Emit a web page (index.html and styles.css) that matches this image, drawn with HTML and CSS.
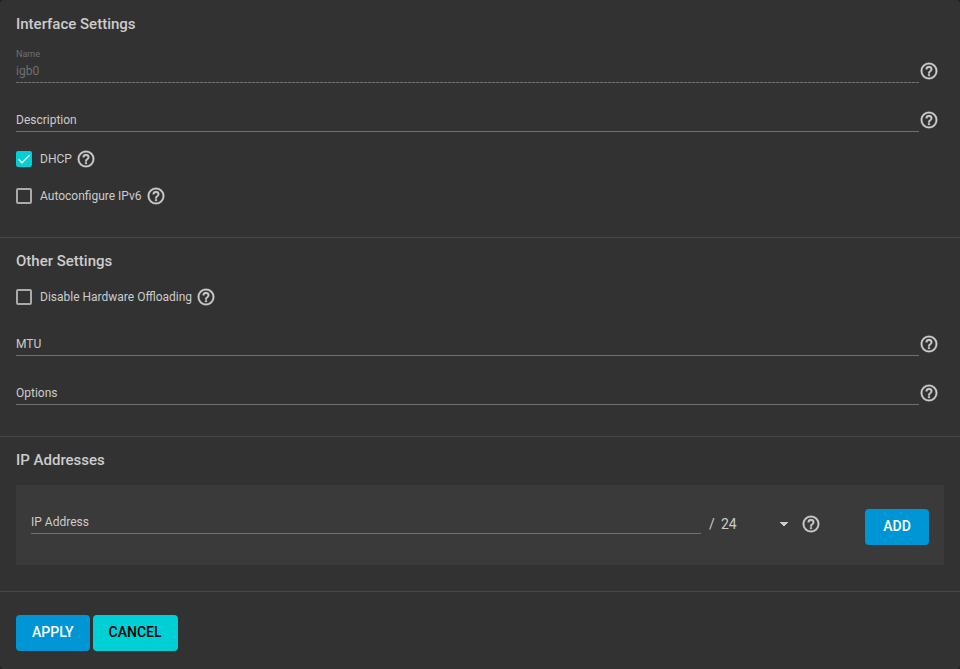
FILE: index.html
```html
<!DOCTYPE html>
<html lang="en">
<head>
    <meta charset="UTF-8">
    <meta name="viewport" content="width=device-width, initial-scale=1.0">
    <title>Interface Settings</title>
    <link rel="stylesheet" href="styles.css">
</head>
<body>
    <svg class="sprite" aria-hidden="true">
        <symbol id="help" viewBox="0 0 24 24">
            <path d="M11,18H13V16H11V18M12,2A10,10 0 0,0 2,12A10,10 0 0,0 12,22A10,10 0 0,0 22,12A10,10 0 0,0 12,2M12,20C7.59,20 4,16.41 4,12C4,7.59 7.59,4 12,4C16.41,4 20,7.59 20,12C20,16.41 16.41,20 12,20M12,6A4,4 0 0,0 8,10H10A2,2 0 0,1 12,8A2,2 0 0,1 14,10C14,12 11,11.75 11,15H13C13,12.75 16,12.5 16,10A4,4 0 0,0 12,6Z"/>
        </symbol>
    </svg>
    <form class="card">
        <section class="section">
            <h2>Interface Settings</h2>
            <div class="field floating">
                <div class="control">
                    <label for="name">Name</label>
                    <input type="text" id="name" value="igb0" disabled>
                </div>
                <svg class="help"><use href="#help"/></svg>
            </div>
            <div class="field">
                <div class="control">
                    <label for="description">Description</label>
                    <input type="text" id="description">
                </div>
                <svg class="help"><use href="#help"/></svg>
            </div>
            <div class="check">
                <input type="checkbox" id="dhcp" checked>
                <svg class="tick" viewBox="0 0 24 24"><path d="M4.1,12.7 9,17.6 20.3,6.3"/></svg>
                <label for="dhcp">DHCP</label>
                <svg class="help"><use href="#help"/></svg>
            </div>
            <div class="check">
                <input type="checkbox" id="ipv6">
                <svg class="tick" viewBox="0 0 24 24"><path d="M4.1,12.7 9,17.6 20.3,6.3"/></svg>
                <label for="ipv6">Autoconfigure IPv6</label>
                <svg class="help"><use href="#help"/></svg>
            </div>
        </section>
        <section class="section">
            <h2>Other Settings</h2>
            <div class="check">
                <input type="checkbox" id="offloading">
                <svg class="tick" viewBox="0 0 24 24"><path d="M4.1,12.7 9,17.6 20.3,6.3"/></svg>
                <label for="offloading">Disable Hardware Offloading</label>
                <svg class="help"><use href="#help"/></svg>
            </div>
            <div class="field">
                <div class="control">
                    <label for="mtu">MTU</label>
                    <input type="text" id="mtu">
                </div>
                <svg class="help"><use href="#help"/></svg>
            </div>
            <div class="field">
                <div class="control">
                    <label for="options">Options</label>
                    <input type="text" id="options">
                </div>
                <svg class="help"><use href="#help"/></svg>
            </div>
        </section>
        <section class="section">
            <h2>IP Addresses</h2>
            <div class="panel">
                <div class="control">
                    <label for="address">IP Address</label>
                    <input type="text" id="address">
                </div>
                <div class="netmask">
                    <label for="netmask">/</label>
                    <select id="netmask">
                        <option>8</option>
                        <option>16</option>
                        <option selected>24</option>
                        <option>32</option>
                    </select>
                    <svg class="help"><use href="#help"/></svg>
                </div>
                <button type="button" class="button primary">ADD</button>
            </div>
        </section>
        <div class="actions">
            <button type="submit" class="button primary">APPLY</button>
            <button type="button" class="button accent">CANCEL</button>
        </div>
    </form>
</body>
</html>
```
FILE: styles.css
```css
* {
    box-sizing: border-box;
}
body {
    margin: 0;
    background-color: #1e1e1e;
    color: #cccccc;
    font-family: Roboto, Arial, sans-serif;
    font-size: 12px;
}
.sprite {
    display: none;
}
.card {
    background-color: #323232;
    border-radius: 4px;
}
.section {
    padding: 11px 16px 16px;
    border-top: 1px solid #474747;
    display: flow-root;
}
.section:first-child {
    border-top-color: transparent;
}
h2 {
    margin: 0 0 12px;
    font-size: 15px;
    font-weight: 500;
    line-height: 24px;
}
.help {
    width: 20px;
    height: 20px;
    flex: none;
    fill: #cccccc;
    stroke: #cccccc;
    stroke-width: 0.4;
}
.field {
    display: flex;
    align-items: flex-end;
    margin: 13px 0 15px;
    padding-right: 5px;
}
.field .help {
    margin-bottom: 2px;
}
.control {
    position: relative;
    flex: 1;
    padding-top: 12px;
}
.control label {
    position: absolute;
    left: 0;
    bottom: 1px;
    line-height: 21px;
    pointer-events: none;
}
.control input {
    display: block;
    width: 100%;
    height: 22px;
    padding: 0;
    border: none;
    border-bottom: 1px solid #707070;
    outline: none;
    background: none;
    color: #cccccc;
    font: inherit;
}
.control input:disabled {
    border-bottom: none;
    padding-bottom: 3px;
    background: repeating-linear-gradient(to right, #707070 0 3px, #4a4a4a 3px 4px) bottom / 100% 1px no-repeat;
    color: #707070;
}
.floating label {
    top: 0;
    bottom: auto;
    font-size: 9px;
    line-height: 10px;
    color: #707070;
}
.check {
    display: flex;
    align-items: center;
    position: relative;
    height: 24px;
    margin-bottom: 13px;
}
.check input {
    appearance: none;
    width: 16px;
    height: 16px;
    margin: 0 8px 0 0;
    border: 2px solid #aaaaaa;
    border-radius: 2px;
}
.check input:checked {
    border-color: #00d0d6;
    background-color: #00d0d6;
}
.tick {
    display: none;
    position: absolute;
    left: 0;
    width: 16px;
    height: 16px;
    fill: none;
    stroke: #ffffff;
    stroke-width: 2;
    pointer-events: none;
}
.check input:checked + .tick {
    display: block;
}
.check label {
    margin-right: 4px;
}
.panel {
    display: flex;
    align-items: flex-start;
    margin: 13px 0 10px;
    min-height: 80px;
    padding: 15px;
    background-color: #3a3a3a;
}
.netmask {
    display: flex;
    align-items: center;
    height: 24px;
    margin: 12px 44px 0 8px;
    font-size: 14px;
}
.netmask label {
    width: 12px;
}
.netmask select {
    appearance: none;
    width: 68px;
    height: 24px;
    margin-right: 12px;
    padding: 0;
    border: none;
    background: conic-gradient(from -45deg at 50% 100%, #cccccc 90deg, transparent 0) right center / 10px 5px no-repeat;
    color: #cccccc;
    font: inherit;
}
.panel .button {
    margin-top: 9px;
}
.actions {
    display: flex;
    gap: 3px;
    padding: 23px 16px 18px;
    border-top: 1px solid #474747;
}
.button {
    min-width: 64px;
    height: 36px;
    padding: 0 16px 2px;
    border: none;
    border-radius: 4px;
    font: 500 14px Roboto, Arial, sans-serif;
    cursor: pointer;
}
.primary {
    background-color: #0095d5;
    color: #ffffff;
}
.accent {
    background-color: #00d0d6;
    color: #000000;
}
```
